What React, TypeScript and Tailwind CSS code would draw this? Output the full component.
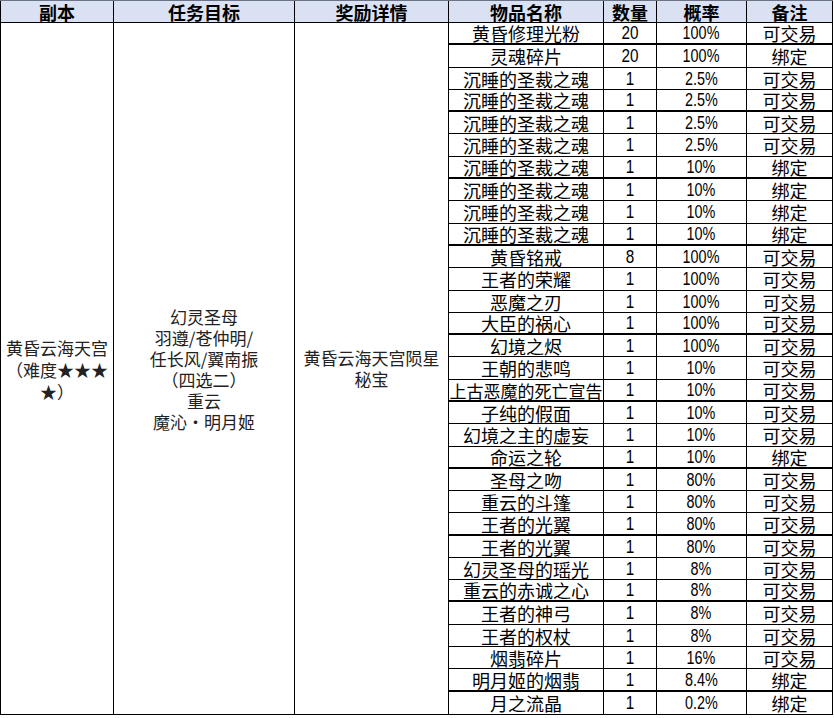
import React from "react";

// 物品掉落数据
const items = [
  ["黄昏修理光粉", "20", "100%", "可交易"],
  ["灵魂碎片", "20", "100%", "绑定"],
  ["沉睡的圣裁之魂", "1", "2.5%", "可交易"],
  ["沉睡的圣裁之魂", "1", "2.5%", "可交易"],
  ["沉睡的圣裁之魂", "1", "2.5%", "可交易"],
  ["沉睡的圣裁之魂", "1", "2.5%", "可交易"],
  ["沉睡的圣裁之魂", "1", "10%", "绑定"],
  ["沉睡的圣裁之魂", "1", "10%", "绑定"],
  ["沉睡的圣裁之魂", "1", "10%", "绑定"],
  ["沉睡的圣裁之魂", "1", "10%", "绑定"],
  ["黄昏铭戒", "8", "100%", "可交易"],
  ["王者的荣耀", "1", "100%", "可交易"],
  ["恶魔之刃", "1", "100%", "可交易"],
  ["大臣的祸心", "1", "100%", "可交易"],
  ["幻境之烬", "1", "100%", "可交易"],
  ["王朝的悲鸣", "1", "10%", "可交易"],
  ["上古恶魔的死亡宣告", "1", "10%", "可交易"],
  ["子纯的假面", "1", "10%", "可交易"],
  ["幻境之主的虚妄", "1", "10%", "可交易"],
  ["命运之轮", "1", "10%", "绑定"],
  ["圣母之吻", "1", "80%", "可交易"],
  ["重云的斗篷", "1", "80%", "可交易"],
  ["王者的光翼", "1", "80%", "可交易"],
  ["王者的光翼", "1", "80%", "可交易"],
  ["幻灵圣母的瑶光", "1", "8%", "可交易"],
  ["重云的赤诚之心", "1", "8%", "可交易"],
  ["王者的神弓", "1", "8%", "可交易"],
  ["王者的权杖", "1", "8%", "可交易"],
  ["烟翡碎片", "1", "16%", "可交易"],
  ["明月姬的烟翡", "1", "8.4%", "绑定"],
  ["月之流晶", "1", "0.2%", "绑定"],
];

// 行高 (截图缩放后 22/23 交替)
const tall = [1, 5, 8, 11, 15, 18, 22, 26, 29];
// 粗线所在行
const thick = [0, 3, 6, 9, 13, 16, 19, 22, 25, 29];

const cjk = "font-['Noto_Sans_CJK_SC',sans-serif]";
const num = "font-['Liberation_Sans',sans-serif]";

export default function App() {
  return (
    <div className={`w-[833px] bg-white text-black ${cjk}`}>
      {/* 表头 */}
      <div className="flex h-[23px] bg-[#d9e1f2] border-t border-[#6b7388] border-b border-b-black text-[18px] font-bold leading-none">
        <div className="w-[113px] border-l border-black flex items-center justify-center">副本</div>
        <div className="w-[181px] border-l border-black flex items-center justify-center">任务目标</div>
        <div className="w-[154px] border-l border-black flex items-center justify-center">奖励详情</div>
        <div className="w-[155px] border-l border-black flex items-center justify-center">物品名称</div>
        <div className="w-[53px] border-l border-black flex items-center justify-center">数量</div>
        <div className="w-[90px] border-l border-black flex items-center justify-center">概率</div>
        <div className="w-[87px] border-l border-r border-black flex items-center justify-center">备注</div>
      </div>

      <div className="flex border-b border-black text-[17px]">
        {/* 副本 */}
        <div className="w-[113px] border-l border-black flex items-center justify-center text-center leading-[22px] text-[#222]">
          <p className="pt-[2px]">
            黄昏云海天宫
            <br />
            （难度★★★
            <br />
            ★）
          </p>
        </div>

        {/* 任务目标 */}
        <div className="w-[181px] border-l border-black flex items-center justify-center text-center leading-[21px] text-[#222]">
          <p>
            幻灵圣母
            <br />
            羽遵/苍仲明/
            <br />
            任长风/翼南振
            <br />
            （四选二）
            <br />
            重云
            <br />
            魔沁・明月姬
          </p>
        </div>

        {/* 奖励详情 */}
        <div className="w-[154px] border-l border-black flex items-center justify-center text-center leading-[21px] text-[#222]">
          <p className="pb-[1px]">
            黄昏云海天宫陨星
            <br />
            秘宝
          </p>
        </div>

        {/* 物品列表 */}
        <div className="flex flex-col">
          {items.map((row, i) => (
            <div
              key={i}
              className={`flex items-center ${tall.includes(i) ? "h-[23px]" : "h-[22px]"} ${
                i === items.length - 1 ? "" : thick.includes(i) ? "border-b-2 border-black" : "border-b border-black"
              }`}
            >
              <div
                className={`w-[155px] h-full border-l border-black flex items-center justify-center whitespace-nowrap leading-none ${
                  row[0].length > 8 ? "text-[17px]" : "text-[18px]"
                }`}
              >
                {row[0]}
              </div>
              <div className={`w-[53px] h-full border-l border-black flex items-center justify-center text-[18px] leading-none ${num}`}>
                <span className="inline-block scale-x-[0.85]">{row[1]}</span>
              </div>
              <div className={`w-[90px] h-full border-l border-black flex items-center justify-center text-[18px] leading-none ${num}`}>
                <span className="inline-block scale-x-[0.8]">{row[2]}</span>
              </div>
              <div className="w-[87px] h-full border-l border-r border-black flex items-center justify-center text-[18px] leading-none">
                {row[3]}
              </div>
            </div>
          ))}
        </div>
      </div>
    </div>
  );
}
